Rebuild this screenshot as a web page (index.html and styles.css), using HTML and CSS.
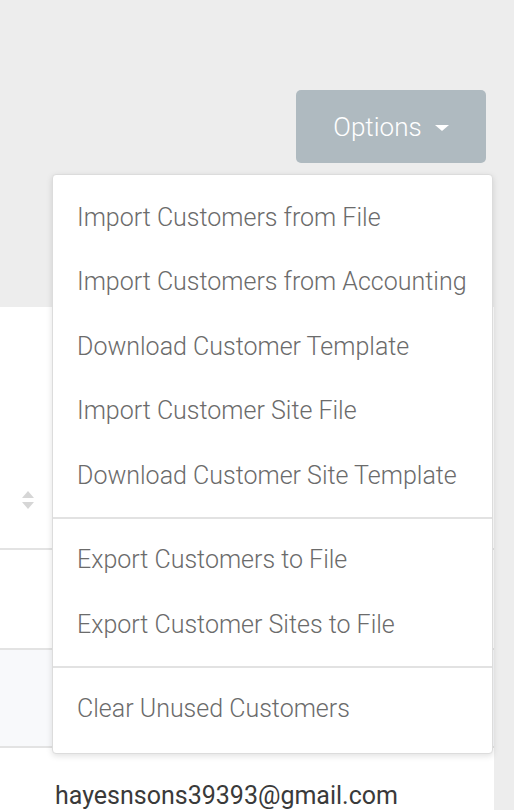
FILE: index.html
```html
<!DOCTYPE html>
<html>
<head>
<meta charset="utf-8">
<link rel="stylesheet" href="styles.css">
</head>
<body>
<div class="page">
  <div class="topbar">
    <button class="options-btn">Options <span class="caret"></span></button>
  </div>
  <div class="card">
    <div class="thead">
      <span class="sort">
        <svg width="14" height="22" viewBox="0 0 14 22"><path d="M1 9 L7 2 L13 9 Z" fill="#d6d6d6"/><path d="M1 13 L7 20 L13 13 Z" fill="#d6d6d6"/></svg>
      </span>
    </div>
    <div class="row"></div>
    <div class="row striped"></div>
    <div class="row email-row"><span class="email">hayesnsons39393@gmail.com</span></div>
  </div>
  <div class="dropdown">
    <div class="item">Import Customers from File</div>
    <div class="item">Import Customers from Accounting</div>
    <div class="item">Download Customer Template</div>
    <div class="item">Import Customer Site File</div>
    <div class="item">Download Customer Site Template</div>
    <div class="divider"></div>
    <div class="item">Export Customers to File</div>
    <div class="item">Export Customer Sites to File</div>
    <div class="divider"></div>
    <div class="item">Clear Unused Customers</div>
  </div>
</div>
</body>
</html>
```
FILE: styles.css
```css
html, body {
  margin: 0;
  padding: 0;
  background: #ededed;
  font-family: Roboto, "Noto Sans", sans-serif;
}
.page {
  position: relative;
  width: 514px;
  height: 810px;
  overflow: hidden;
}
.topbar {
  height: 307px;
  display: flex;
  justify-content: flex-end;
  align-items: flex-start;
  padding-right: 28px;
  box-sizing: border-box;
  padding-top: 90px;
}
.options-btn {
  width: 190px;
  height: 73px;
  background: #afbac0;
  border: none;
  border-radius: 5px;
  color: #ffffff;
  font-family: Roboto, sans-serif;
  font-weight: 300;
  font-size: 26px;
  display: flex;
  align-items: center;
  justify-content: center;
  gap: 13px;
  padding: 0;
}
.caret {
  width: 0;
  height: 0;
  border-left: 7px solid transparent;
  border-right: 7px solid transparent;
  border-top: 6px solid #ffffff;
  margin-top: 2px;
}
.card {
  width: 494px;
  background: #ffffff;
  height: 503px;
}
.thead {
  height: 243px;
  border-bottom: 2px solid #e3e3e3;
  position: relative;
  display: flex;
  align-items: flex-end;
  padding-left: 21px;
  padding-bottom: 37px;
  box-sizing: border-box;
}
.sort {
  display: block;
  height: 22px;
}
.row {
  height: 100px;
  border-bottom: 2px solid #e3e3e3;
  box-sizing: border-box;
}
.row.striped {
  background: #f8f9fb;
  height: 98px;
}
.row.email-row {
  border-bottom: none;
  padding: 33px 0 0 55px;
  box-sizing: border-box;
}
.email {
  font-size: 25px;
  color: #3a3a3a;
  font-weight: 400;
}
.dropdown {
  position: absolute;
  left: 52px;
  top: 174px;
  width: 441px;
  box-sizing: border-box;
  background: #ffffff;
  border: 1px solid #dcdcdc;
  border-radius: 4px;
  box-shadow: 0 2px 6px rgba(0,0,0,0.12);
  padding: 10px 0 12px;
}
.item {
  height: 64.5px;
  display: flex;
  align-items: center;
  padding-left: 24px;
  font-size: 25px;
  font-weight: 300;
  color: #6b6b6b;
  white-space: nowrap;
}
.divider {
  height: 2px;
  background: #e2e2e2;
  margin: 9px 0;
}
```
